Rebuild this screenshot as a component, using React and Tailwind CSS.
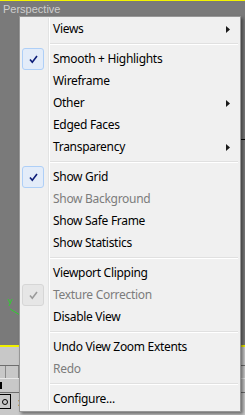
import React from 'react'

const MENU = [
  { label: 'Views', sub: true },
  { sep: true },
  { label: 'Smooth + Highlights', checked: true },
  { label: 'Wireframe' },
  { label: 'Other', sub: true },
  { label: 'Edged Faces' },
  { label: 'Transparency', sub: true },
  { sep: true },
  { label: 'Show Grid', checked: true },
  { label: 'Show Background', disabled: true },
  { label: 'Show Safe Frame' },
  { label: 'Show Statistics' },
  { sep: true },
  { label: 'Viewport Clipping' },
  { label: 'Texture Correction', checked: true, disabled: true },
  { label: 'Disable View' },
  { sep: true },
  { label: 'Undo View Zoom Extents' },
  { label: 'Redo', disabled: true },
  { sep: true },
  { label: 'Configure...' },
]

function Check({ disabled }) {
  return (
    <div
      className={`w-[22px] h-[22px] ml-[2px] rounded-[3px] border flex items-center justify-center ${
        disabled ? 'border-[#d6d6d6] bg-[#e6e6e6]' : 'border-[#aecff7] bg-[#e3ecf9]'
      }`}
    >
      <svg width="9" height="9" viewBox="0 0 9 9">
        <path
          d="M1 4.5 L3.3 7.3 L8 1"
          fill="none"
          stroke={disabled ? '#9a9a9a' : '#0c1c78'}
          strokeWidth="1.6"
        />
      </svg>
    </div>
  )
}

function Row({ item }) {
  if (item.sep) {
    return (
      <div className="flex h-[8px]">
        <div className="w-[29px] shrink-0 border-r border-[#e2e3e3]" />
        <div className="flex-1 border-l border-white flex flex-col justify-center mr-[2px]">
          <div className="h-px bg-[#e0e0e0]" />
          <div className="h-px bg-white" />
        </div>
      </div>
    )
  }
  return (
    <div className="flex h-[22px]">
      <div className="w-[29px] shrink-0 border-r border-[#e2e3e3] flex items-center">
        {item.checked && <Check disabled={item.disabled} />}
      </div>
      <div className="flex-1 border-l border-white flex items-center pl-[3px]">
        <span
          className={`text-[12px] leading-none tracking-[-0.3px] ${
            item.disabled ? 'text-[#7c7c7c]' : 'text-black'
          }`}
        >
          {item.label}
        </span>
        {item.sub && (
          <svg className="ml-auto mr-[10px]" width="4" height="7" viewBox="0 0 4 7">
            <path d="M0 0 L4 3.5 L0 7 Z" fill="#1a1a1a" />
          </svg>
        )}
      </div>
    </div>
  )
}

export default function App() {
  return (
    <div
      className="relative w-[245px] h-[415px] overflow-hidden bg-[#c8c8c8]"
      style={{ fontFamily: '"Noto Sans", "Open Sans", sans-serif' }}
    >
      {/* Viewport */}
      <div className="h-[345px] bg-[#7a7a7a] border-t border-[#f4f400] relative">
        <p
          className="pl-[3px] pt-[3px] text-[11px] leading-none text-[#cfcfcf]"
          style={{ fontFamily: '"Liberation Sans", sans-serif' }}
        >
          Perspective
        </p>
        {/* axis gizmo */}
        <svg className="absolute left-[5px] top-[296px]" width="16" height="20" viewBox="0 0 16 20">
          <path d="M3 2 L5 6 M7 2 L4 9" stroke="#2fd02f" strokeWidth="1" fill="none" />
          <path d="M5 12 L15 18" stroke="#2fd02f" strokeWidth="1" fill="none" />
        </svg>
        <div className="absolute right-0 top-[138px] w-[4px] h-px bg-black" />
      </div>
      <div className="h-[2px] bg-[#f0f000]" />

      {/* Toolbar */}
      <div className="pt-[18px]">
        <div className="h-px bg-[#6e6e6e]" />
        <div className="flex h-[12px]">
          <div className="w-[6px] border-r border-[#8a8a8a]" />
          <div className="w-[13px] border-r border-[#8a8a8a]" />
          <div className="flex-1" />
        </div>
        <div className="h-px bg-[#e8e8e8]" />
        <div className="h-[13px] flex items-center">
          <div className="w-[2px] h-[7px] bg-black" />
        </div>
        <div className="h-px bg-[#6e6e6e]" />
        <div className="flex items-center gap-[7px] pt-[1px]">
          <div className="w-[11px] h-[15px] border border-black border-l-0 flex items-center justify-center">
            <div className="w-[6px] h-[6px] rounded-full border border-black" />
          </div>
          <span className="text-[10px] leading-none text-black">:</span>
        </div>
      </div>

      {/* Context menu */}
      <div className="absolute left-[19px] top-[16px] w-[222px] bg-[#f0f0f0] border border-[#979797] py-px shadow-[2px_2px_3px_rgba(0,0,0,0.45)]">
        {MENU.map((item, i) => (
          <Row key={i} item={item} />
        ))}
      </div>
    </div>
  )
}
